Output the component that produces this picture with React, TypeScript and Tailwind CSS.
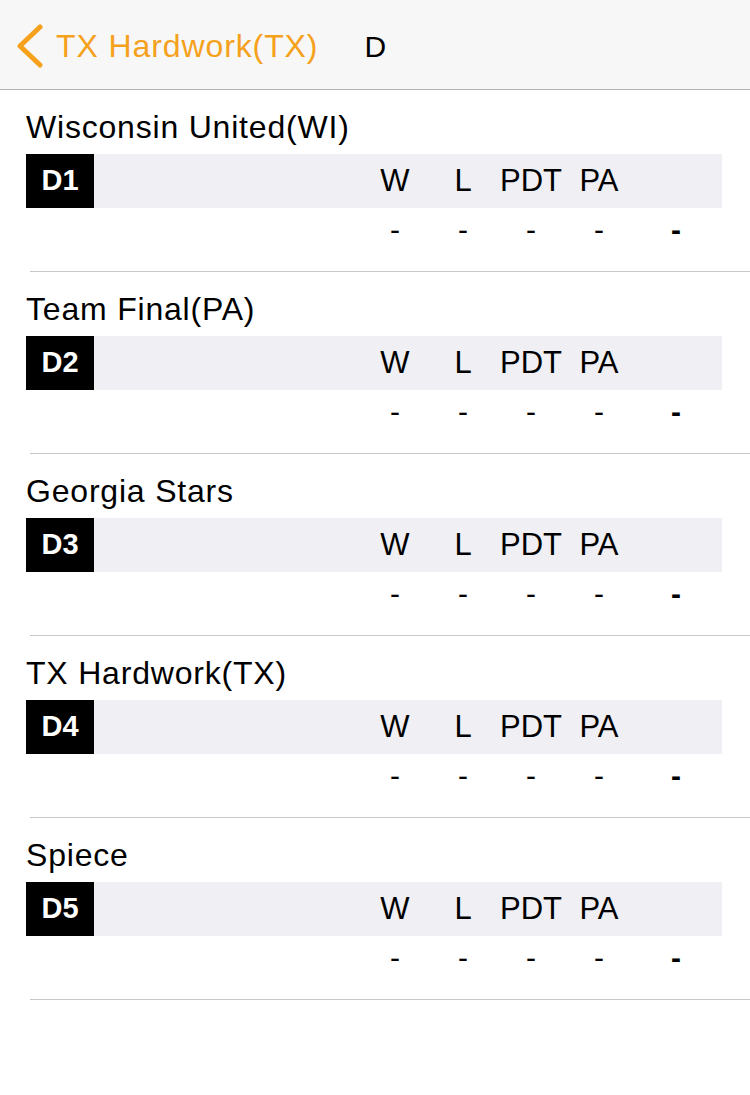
import React from "react";

interface Division {
  code: string;
  team: string;
}

const divisions: Division[] = [
  { code: "D1", team: "Wisconsin United(WI)" },
  { code: "D2", team: "Team Final(PA)" },
  { code: "D3", team: "Georgia Stars" },
  { code: "D4", team: "TX Hardwork(TX)" },
  { code: "D5", team: "Spiece" },
];

const columns = ["W", "L", "PDT", "PA"];

function NavBar() {
  return (
    <div className="flex h-[90px] items-center border-b border-[#b2b2b2] bg-[#f7f7f7] pt-[3px]">
      <svg
        className="ml-[16px] h-[44px] w-[28px]"
        viewBox="0 0 28 44"
        fill="none"
        stroke="#f5a11c"
        strokeWidth={5}
        strokeLinecap="round"
        strokeLinejoin="round"
      >
        <path d="M24 3 L4 22 L24 41" />
      </svg>
      <span className="ml-[12px] text-[32px] tracking-[0.9px] text-[#f5a11c]">
        TX Hardwork(TX)
      </span>
      <span className="ml-[46px] text-[30px] text-black">D</span>
    </div>
  );
}

function DivisionBlock({ division }: { division: Division }) {
  return (
    <div>
      <div className="pl-[26px] pt-[19px] text-[32px] leading-[36px] tracking-[0.8px] text-black">
        {division.team}
      </div>
      <div className="ml-[26px] mt-[9px] flex h-[54px] w-[696px] items-center bg-[#efeff4]">
        <div className="flex h-full w-[68px] items-center justify-center bg-black text-[29px] font-bold text-white">
          {division.code}
        </div>
        <div className="ml-[267px] flex text-[31px] text-black">
          {columns.map((col) => (
            <div key={col} className="w-[68px] text-center">
              {col}
            </div>
          ))}
        </div>
      </div>
      <div className="mt-[3px] flex h-[36px] items-center pl-[361px] text-[30px] text-black">
        {columns.map((col) => (
          <div key={col} className="w-[68px] text-center">
            -
          </div>
        ))}
        <div className="w-[86px] text-center font-bold">-</div>
      </div>
      <div className="ml-[30px] mt-[24px] h-px bg-[#c8c7cc]" />
    </div>
  );
}

export default function App() {
  return (
    <div
      className="h-[1095px] w-[750px] overflow-hidden bg-white"
      style={{ fontFamily: '"Liberation Sans", Arial, sans-serif' }}
    >
      <NavBar />
      {divisions.map((d) => (
        <DivisionBlock key={d.code} division={d} />
      ))}
    </div>
  );
}
